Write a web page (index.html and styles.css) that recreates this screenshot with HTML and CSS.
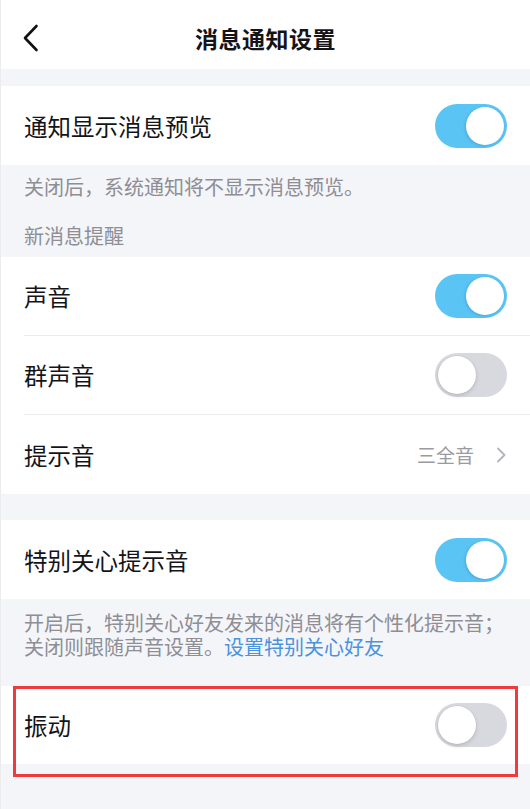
FILE: index.html
```html
<!DOCTYPE html>
<html lang="zh-CN">
<head>
<meta charset="utf-8">
<title>消息通知设置</title>
<link rel="stylesheet" href="styles.css">
</head>
<body>
<div class="page">
  <header class="header">
    <div class="back">
      <svg width="16" height="28" viewBox="0 0 16 28"><polyline points="13.5,2 2,14 13.5,26" fill="none" stroke="#111" stroke-width="2.6" stroke-linecap="round" stroke-linejoin="round"/></svg>
    </div>
    <div class="title">消息通知设置</div>
    <div></div>
  </header>

  <div class="gap-top"></div>

  <section class="group">
    <div class="row"><div class="row-inner"><span class="label">通知显示消息预览</span><span class="switch on"><span class="knob"></span></span></div></div>
  </section>

  <div class="note note-first">
    <p class="note-text">关闭后，系统通知将不显示消息预览。</p>
    <p class="note-text section-title">新消息提醒</p>
  </div>

  <section class="group">
    <div class="row"><div class="row-inner sep"><span class="label">声音</span><span class="switch on"><span class="knob"></span></span></div></div>
    <div class="row"><div class="row-inner sep"><span class="label">群声音</span><span class="switch"><span class="knob"></span></span></div></div>
    <div class="row"><div class="row-inner"><span class="label">提示音</span><span class="value">三全音<svg class="chev" width="10" height="16" viewBox="0 0 10 16"><polyline points="2,1.5 8.5,8 2,14.5" fill="none" stroke="#b3b3ba" stroke-width="1.8" stroke-linecap="round" stroke-linejoin="round"/></svg></span></div></div>
  </section>

  <div class="gap-mid"></div>

  <section class="group">
    <div class="row"><div class="row-inner"><span class="label">特别关心提示音</span><span class="switch on"><span class="knob"></span></span></div></div>
  </section>

  <div class="note note-second">
    <p class="note-text">开启后，特别关心好友发来的消息将有个性化提示音；<br>关闭则跟随声音设置。<span class="link">设置特别关心好友</span></p>
  </div>

  <div class="highlight-wrap">
    <section class="group">
      <div class="row"><div class="row-inner"><span class="label">振动</span><span class="switch"><span class="knob"></span></span></div></div>
    </section>
    <div class="highlight"></div>
  </div>
</div>
</body>
</html>
```

FILE: styles.css
```css
html, body {
  margin: 0;
  padding: 0;
  background: #f4f5f9;
}

.page {
  width: 530px;
  min-height: 809px;
  background: #f4f5f9;
  font-family: "Noto Sans CJK SC", "Noto Sans", sans-serif;
  color: #141418;
  border-left: 1px solid #ececef;
  box-sizing: border-box;
}

.header {
  height: 69px;
  background: #fff;
  display: grid;
  grid-template-columns: 1fr auto 1fr;
  align-items: center;
  padding-top: 6px;
  box-sizing: border-box;
}

.back {
  padding-left: 22px;
  display: flex;
  align-items: center;
}

.title {
  font-size: 23px;
  font-weight: 700;
  line-height: 30px;
  letter-spacing: 0.5px;
}

.gap-top {
  height: 17px;
}

.group {
  background: #fff;
}

.row {
  padding-left: 23px;
}

.row-inner {
  height: 79px;
  display: flex;
  align-items: center;
  justify-content: space-between;
  padding-right: 23px;
  box-sizing: border-box;
}

.row-inner.sep {
  border-bottom: 1px solid #ececef;
}

.label {
  font-size: 23.5px;
  line-height: 30px;
}

.value {
  display: flex;
  align-items: center;
  font-size: 19px;
  color: #9a9aa0;
  line-height: 26px;
}

.chev {
  margin-left: 22px;
  margin-right: 1px;
}

.switch {
  width: 72px;
  height: 44px;
  border-radius: 22px;
  background: #d8d8df;
  display: flex;
  align-items: center;
  justify-content: flex-start;
  padding: 0 3px;
  box-sizing: border-box;
}

.switch.on {
  background: #5ac4f4;
  justify-content: flex-end;
}

.knob {
  width: 38px;
  height: 38px;
  border-radius: 50%;
  background: #fff;
  box-shadow: 0 2px 4px rgba(0, 0, 0, 0.14), 0 0 0 0.5px rgba(0, 0, 0, 0.06);
}

.switch.on .knob {
  box-shadow: -1px 1px 3px rgba(30, 100, 140, 0.25);
}

.note {
  padding: 0 23px;
}

.note-first {
  height: 92px;
  padding-top: 10px;
  box-sizing: border-box;
}

.note-second {
  height: 87px;
  padding-top: 12px;
  box-sizing: border-box;
}

.note-text {
  margin: 0;
  font-size: 20px;
  line-height: 24px;
  color: #8e8e94;
}

.section-title {
  margin-top: 25px;
}

.link {
  color: #4a92dc;
}

.gap-mid {
  height: 26px;
}

.highlight-wrap {
  position: relative;
}

.highlight-wrap .row-inner {
  height: 78px;
}

.highlight {
  position: absolute;
  top: 0;
  left: 12px;
  right: 12px;
  height: 91px;
  border: 3px solid #f03a3b;
  box-sizing: border-box;
  pointer-events: none;
}
```
